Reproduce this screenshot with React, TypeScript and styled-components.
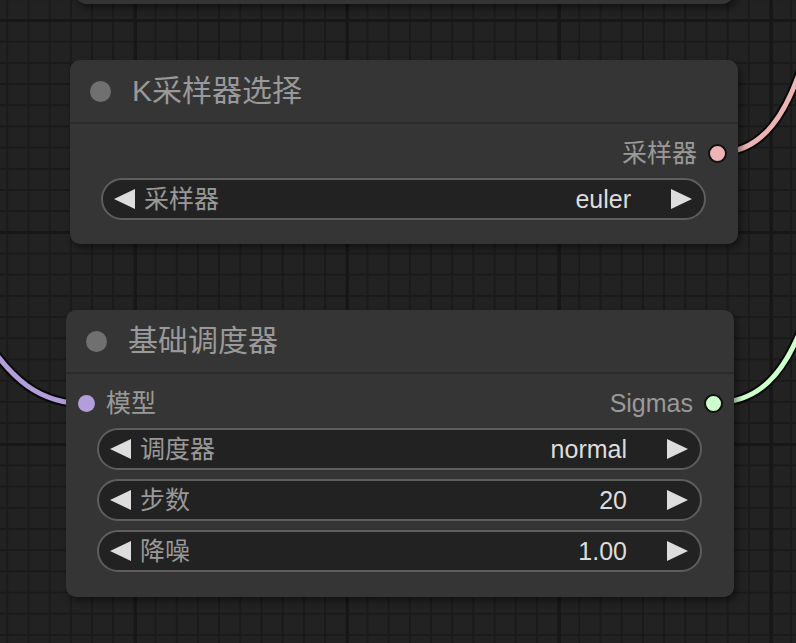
import React from "react";
import styled, { createGlobalStyle } from "styled-components";

const GlobalStyle = createGlobalStyle`
  html, body {
    margin: 0;
    padding: 0;
    background: #222222;
  }
  * {
    box-sizing: border-box;
  }
`;

const FONT = `"Liberation Sans", "Noto Sans CJK SC", sans-serif`;

const Canvas = styled.div`
  position: relative;
  width: 796px;
  height: 643px;
  overflow: hidden;
  font-family: ${FONT};
  background-color: #222222;
  background-image:
    linear-gradient(to right, #171717 3px, transparent 3px),
    linear-gradient(to bottom, #171717 3px, transparent 3px),
    linear-gradient(to right, #1a1a1a 2px, transparent 2px),
    linear-gradient(to bottom, #1a1a1a 2px, transparent 2px);
  background-size: 212px 100%, 100% 212px, 21.2px 100%, 100% 21.2px;
  background-position: 134px 0, 0 19px, 6.3px 0, 0 19.5px;
`;

const Links = styled.svg`
  position: absolute;
  left: 0;
  top: 0;
  z-index: 0;
`;

const Node = styled.div<{ $x: number; $y: number; $w: number }>`
  position: absolute;
  left: ${(p) => p.$x}px;
  top: ${(p) => p.$y}px;
  width: ${(p) => p.$w}px;
  z-index: 1;
  background: #353535;
  border-radius: 10px;
  box-shadow: 3px 4px 7px rgba(0, 0, 0, 0.45);
  display: flex;
  flex-direction: column;
`;

const GhostBody = styled.div`
  height: 54px;
`;

const Title = styled.div`
  height: 64px;
  display: flex;
  align-items: center;
  gap: 21px;
  padding: 0 0 0 20px;
  border-bottom: 2px solid #2b2b2b;
  color: #999999;
  font-size: 30px;
  line-height: 1;
`;

const TitleDot = styled.span`
  width: 21px;
  height: 21px;
  border-radius: 50%;
  background: #707070;
  flex: none;
`;

const Body = styled.div<{ $bottom: number }>`
  display: flex;
  flex-direction: column;
  padding: 8px 0 ${(p) => p.$bottom}px 0;
`;

const SlotRow = styled.div`
  height: 42px;
  display: flex;
  align-items: center;
  justify-content: space-between;
  padding: 0 11px 0 12px;
  font-size: 25px;
  line-height: 1;
  color: #999999;
`;

const Slot = styled.div`
  display: flex;
  align-items: center;
  gap: 11px;
`;

const SlotDot = styled.span<{ $color: string; $ring?: boolean }>`
  width: ${(p) => (p.$ring ? 19 : 17)}px;
  height: ${(p) => (p.$ring ? 19 : 17)}px;
  border-radius: 50%;
  background: ${(p) => p.$color};
  border: ${(p) => (p.$ring ? "2px solid #111" : "none")};
  flex: none;
`;

const Widgets = styled.div`
  display: flex;
  flex-direction: column;
  gap: 9px;
  margin-top: 4px;
  padding: 0 32px 0 31px;
`;

const Widget = styled.div`
  height: 42px;
  border-radius: 21px;
  background: #222222;
  border: 2px solid #5e5e5e;
  display: flex;
  align-items: center;
  padding: 0 12px 0 11px;
  font-size: 25px;
  line-height: 1;
`;

const Arrow = styled.span<{ $dir: "left" | "right" }>`
  width: 0;
  height: 0;
  flex: none;
  border-top: 10.5px solid transparent;
  border-bottom: 10.5px solid transparent;
  ${(p) =>
    p.$dir === "left"
      ? "border-right: 21px solid #dddddd;"
      : "border-left: 21px solid #dddddd; margin-left: 40px;"}
`;

const WidgetLabel = styled.span`
  flex: 1;
  margin-left: 9px;
  color: #999999;
`;

const WidgetValue = styled.span`
  color: #dddddd;
`;

type WidgetDef = { label: string; value: string };

function ComboWidget({ label, value }: WidgetDef) {
  return (
    <Widget>
      <Arrow $dir="left" />
      <WidgetLabel>{label}</WidgetLabel>
      <WidgetValue>{value}</WidgetValue>
      <Arrow $dir="right" />
    </Widget>
  );
}

const schedulerWidgets: WidgetDef[] = [
  { label: "调度器", value: "normal" },
  { label: "步数", value: "20" },
  { label: "降噪", value: "1.00" },
];

function Link({ d, color }: { d: string; color: string }) {
  return (
    <g fill="none" strokeLinecap="round">
      <path d={d} stroke="rgba(0,0,0,0.75)" strokeWidth={9} />
      <path d={d} stroke={color} strokeWidth={5} />
    </g>
  );
}

export default function App() {
  return (
    <>
      <GlobalStyle />
      <Canvas>
        <Links width={796} height={643} viewBox="0 0 796 643">
          <Link d="M717,153 C760,153 790,120 812,30" color="#ecb4b4" />
          <Link d="M713,403 C755,403 785,380 808,310" color="#cdffcd" />
          <Link d="M-20,330 C10,380 40,404 87,404" color="#b39ddb" />
        </Links>

        <Node $x={76} $y={-50} $w={657}>
          <GhostBody />
        </Node>

        <Node $x={70} $y={60} $w={668}>
          <Title>
            <TitleDot />
            K采样器选择
          </Title>
          <Body $bottom={24}>
            <SlotRow>
              <span />
              <Slot>
                采样器
                <SlotDot $color="#ecb4b4" $ring />
              </Slot>
            </SlotRow>
            <Widgets>
              <ComboWidget label="采样器" value="euler" />
            </Widgets>
          </Body>
        </Node>

        <Node $x={66} $y={310} $w={668}>
          <Title>
            <TitleDot />
            基础调度器
          </Title>
          <Body $bottom={25}>
            <SlotRow>
              <Slot>
                <SlotDot $color="#b39ddb" />
                模型
              </Slot>
              <Slot>
                Sigmas
                <SlotDot $color="#cdffcd" $ring />
              </Slot>
            </SlotRow>
            <Widgets>
              {schedulerWidgets.map((w) => (
                <ComboWidget key={w.label} {...w} />
              ))}
            </Widgets>
          </Body>
        </Node>
      </Canvas>
    </>
  );
}
